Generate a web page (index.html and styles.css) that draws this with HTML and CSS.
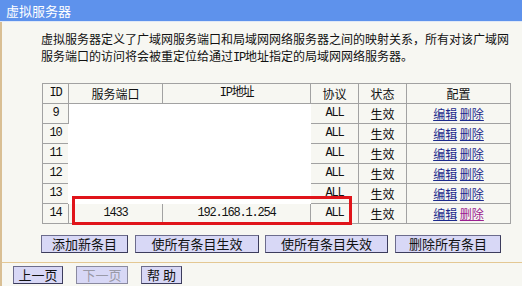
FILE: index.html
```html
<!DOCTYPE html>
<html>
<head>
<meta charset="utf-8">
<link rel="stylesheet" href="styles.css">
</head>
<body>
<div class="title">虚拟服务器</div>
<div class="panel">
  <p class="desc">虚拟服务器定义了广域网服务端口和局域网网络服务器之间的映射关系，所有对该广域网<br>服务端口的访问将会被重定位给通过<span class="asc">IP</span>地址指定的局域网网络服务器。</p>
  <div class="tablewrap">
    <table class="grid">
      <colgroup>
        <col class="c-id"><col class="c-port"><col class="c-ip"><col class="c-proto"><col class="c-state"><col class="c-cfg">
      </colgroup>
      <tr class="head">
        <td class="asc">ID</td><td>服务端口</td><td class="asc">IP地址</td><td>协议</td><td>状态</td><td>配置</td>
      </tr>
      <tr>
        <td class="asc">9</td><td class="blank" rowspan="5" colspan="2"></td><td class="asc">ALL</td><td>生效</td><td><a class="lnk">编辑</a> <a class="lnk">删除</a></td>
      </tr>
      <tr><td class="asc">10</td><td class="asc">ALL</td><td>生效</td><td><a class="lnk">编辑</a> <a class="lnk">删除</a></td></tr>
      <tr><td class="asc">11</td><td class="asc">ALL</td><td>生效</td><td><a class="lnk">编辑</a> <a class="lnk">删除</a></td></tr>
      <tr><td class="asc">12</td><td class="asc">ALL</td><td>生效</td><td><a class="lnk">编辑</a> <a class="lnk">删除</a></td></tr>
      <tr><td class="asc">13</td><td class="asc">ALL</td><td>生效</td><td><a class="lnk">编辑</a> <a class="lnk">删除</a></td></tr>
      <tr><td class="asc">14</td><td class="asc">1433</td><td class="asc">192.168.1.254</td><td class="asc">ALL</td><td>生效</td><td><a class="lnk">编辑</a> <a class="lnk visited">删除</a></td></tr>
    </table>
    <div class="highlight"></div>
  </div>
  <div class="actions">
    <button class="btn b1">添加新条目</button>
    <button class="btn b2">使所有条目生效</button>
    <button class="btn b3">使所有条目失效</button>
    <button class="btn b4">删除所有条目</button>
  </div>
  <div class="footer">
    <button class="btn f1">上一页</button>
    <button class="btn f2 disabled">下一页</button>
    <button class="btn f3">帮 助</button>
  </div>
</div>
</body>
</html>
```
FILE: styles.css
```css
html, body {
  margin: 0;
  padding: 0;
  background: #f7f7f2;
  font-family: "Noto Sans CJK SC", sans-serif;
  font-size: 12px;
  color: #111;
  width: 522px;
  height: 286px;
  overflow: hidden;
}
.asc {
  font-family: "Liberation Mono", "Noto Sans CJK SC", monospace;
  letter-spacing: -1.2px;
}
.title {
  height: 21px;
  line-height: 21px;
  background: #5e92ec;
  color: #fff;
  font-size: 13px;
  padding-left: 6px;
  border-bottom: 1px solid #dfe8f7;
}
.panel {
  border-left: 2px solid #d9bf94;
  height: 264px;
  box-sizing: border-box;
}
.desc {
  margin: 0;
  padding: 8px 0 0 39px;
  line-height: 17px;
  white-space: nowrap;
}
.desc .asc { letter-spacing: -1.2px; }
.tablewrap {
  position: relative;
  margin: 16px 0 0 40px;
  width: 468px;
}
.grid {
  border-collapse: collapse;
  width: 468px;
  table-layout: fixed;
  border: 1px solid #8a8a8a;
}
.c-id { width: 26px; }
.c-port { width: 94px; }
.c-ip { width: 148px; }
.c-proto { width: 48px; }
.c-state { width: 48px; }
.c-cfg { width: 104px; }
.grid td {
  height: 19px;
  padding: 0;
  text-align: center;
  border: 1px solid #a2a2a2;
  line-height: 19px;
  white-space: nowrap;
}
.grid td.blank {
  background: #fff;
  border-color: #fff;
}
.lnk {
  color: #1c2a8c;
  text-decoration: underline;
}
.lnk.visited {
  color: #9a208f;
}
.highlight {
  position: absolute;
  left: 30px;
  top: 113px;
  width: 280px;
  height: 29px;
  box-sizing: border-box;
  border: 3px solid #e0141a;
}
.actions {
  display: flex;
  gap: 7px;
  margin: 11px 0 0 39px;
}
.btn {
  font-family: "Noto Sans CJK SC", sans-serif;
  font-size: 13px;
  height: 18px;
  line-height: 16px;
  padding: 0;
  margin: 0;
  background: #d8d8f6;
  color: #111;
  border: 1px solid #3c3c5c;
  border-top-color: #6c6c8c;
  border-left-color: #6c6c8c;
  box-sizing: border-box;
}
.b1 { width: 87px; }
.b2 { width: 124px; }
.b3 { width: 123px; margin-left: -1px; }
.b4 { width: 106px; }
.footer {
  margin-top: 9px;
  border-top: 1px solid #e4c894;
  border-bottom: 1px solid #e4c894;
  height: 25px;
  box-sizing: border-box;
  display: flex;
  align-items: center;
  gap: 13px;
  padding-left: 11px;
}
.f1 { width: 50px; }
.f2 { width: 52px; }
.f3 { width: 41px; }
.btn.disabled {
  color: #9a9aa8;
  border-color: #8a8aa0;
}
```
